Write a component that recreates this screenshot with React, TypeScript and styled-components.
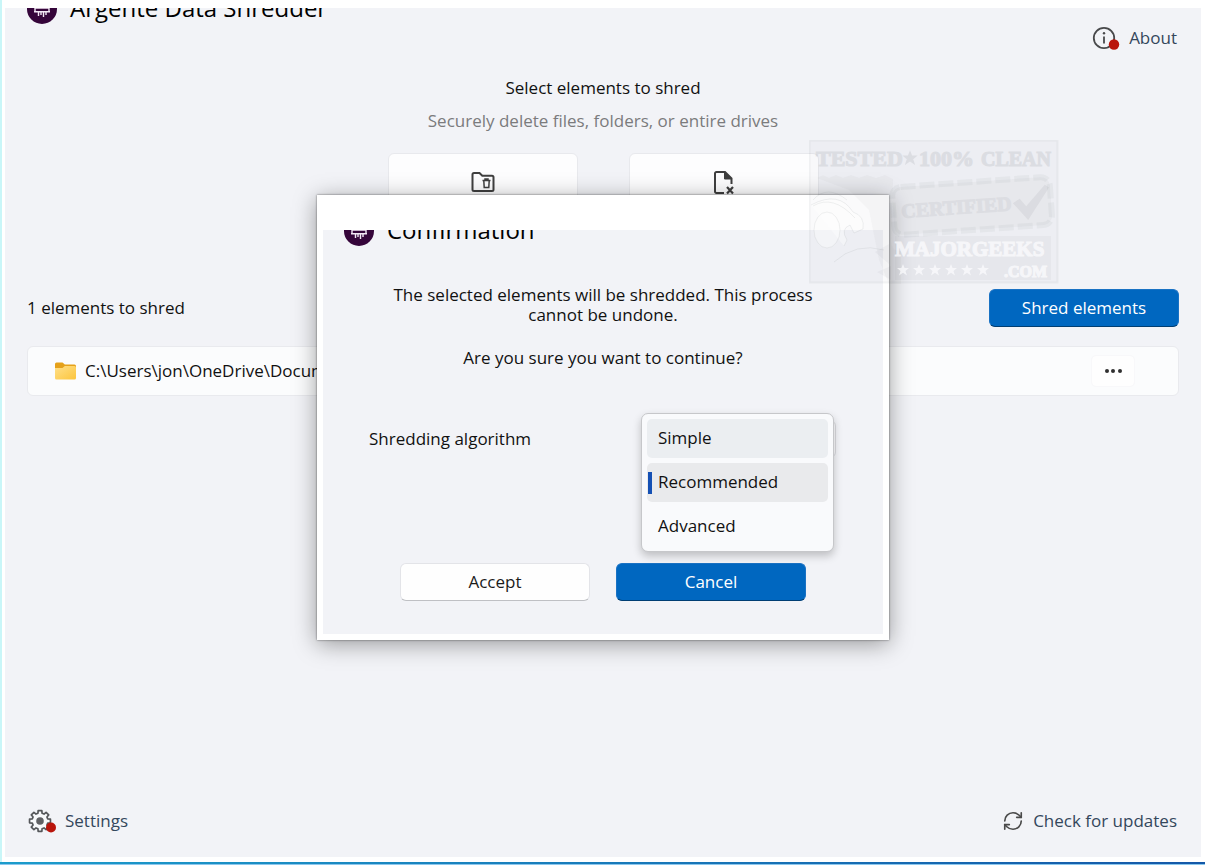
import React from "react";
import styled, { createGlobalStyle, css } from "styled-components";
import { RefreshCw } from "lucide-react";

const GlobalStyle = createGlobalStyle`
  *, *::before, *::after { box-sizing: border-box; }
  body { margin: 0; background: #ffffff; }
  body, button, select {
    font-family: "Open Sans", "Noto Sans", sans-serif;
    font-size: 17px;
    line-height: 24px;
    color: #111111;
  }
  h1, h2, p, ul { margin: 0; padding: 0; font-weight: 400; }
`;

const Window = styled.div`
  position: relative;
  display: flex;
  flex-direction: column;
  min-height: 100vh;
  padding: 8px 4px 5px 3px;
  background: #ffffff;
  border-left: 2px solid #c9f6f8;
`;

const Content = styled.main`
  flex: 1;
  display: flex;
  flex-direction: column;
  padding: 0 22px 22px;
  background: #f2f3f7;
`;

const WindowEdge = styled.div`
  height: 3px;
  margin: 5px -4px -5px -5px;
  flex-shrink: 0;
  background: linear-gradient(90deg, #1c9ccb, #1458a8);
  border-bottom: 1px solid #8cc8ee;
`;

const TitleBar = styled.header`
  display: flex;
  align-items: flex-end;
  gap: 13px;
  height: 16px;
  overflow: hidden;
  flex-shrink: 0;
`;

const Title = styled.h1`
  font-size: 24px;
  line-height: 32px;
  color: #000000;
  white-space: nowrap;
`;

const Toolbar = styled.div`
  display: flex;
  justify-content: flex-end;
`;

const Footer = styled.footer`
  display: flex;
  justify-content: space-between;
  margin-top: auto;
`;

const LinkButton = styled.button`
  display: flex;
  align-items: center;
  gap: 9px;
  height: 28px;
  padding: 0 2px 0 0;
  border: 0;
  background: transparent;
  color: #34475c;
  svg { flex-shrink: 0; color: #4a4a4a; }
`;

const Intro = styled.section`
  display: flex;
  flex-direction: column;
  align-items: center;
  margin-top: 24px;
`;

const Heading = styled.h2`
  font-size: 17px;
  line-height: 24px;
`;

const Hint = styled.p`
  margin-top: 9px;
  color: #7b7b7d;
`;

const Sources = styled.div`
  display: flex;
  gap: 51px;
  margin-top: 20px;
`;

const SourceCard = styled.button`
  display: flex;
  justify-content: center;
  align-items: flex-start;
  width: 190px;
  height: 84px;
  padding: 17px 0 0;
  background: #fdfdfe;
  border: 1px solid #e8e9ed;
  border-radius: 6px;
`;

const ListHeader = styled.div`
  display: flex;
  align-items: center;
  justify-content: space-between;
  margin-top: 52px;
`;

const ActionButton = styled.button<{ $primary?: boolean }>`
  width: 190px;
  height: 38px;
  padding: 0 0 1px;
  border-radius: 6px;
  ${(p) =>
    p.$primary
      ? css`
          background: #0067c0;
          color: #ffffff;
          border: 1px solid #1a72c4;
          border-bottom-color: #003e73;
        `
      : css`
          background: #fefefe;
          color: #1b1b1b;
          border: 1px solid #e3e4e8;
          border-bottom-color: #bfc0c4;
        `}
`;

const ElementRow = styled.div`
  display: flex;
  align-items: center;
  height: 50px;
  margin-top: 19px;
  padding: 0 43px 0 27px;
  background: #fbfcfd;
  border: 1px solid #e9eaee;
  border-radius: 6px;
`;

const Path = styled.span`
  flex: 1;
  margin-left: 9px;
`;

const MoreButton = styled.button`
  display: flex;
  align-items: center;
  justify-content: center;
  width: 44px;
  height: 32px;
  padding: 0;
  border: 1px solid #f8f8fa;
  border-radius: 5px;
  background: #fefefe;
`;

const Overlay = styled.div`
  position: absolute;
  inset: 0;
  display: flex;
  justify-content: center;
  align-items: flex-start;
  padding: 195px 1px 0 0;
`;

const Dialog = styled.section`
  width: 572px;
  padding: 35px 6px 6px;
  background: #ffffff;
  box-shadow: 0 0 2px rgba(0, 0, 0, 0.55), 0 4px 22px rgba(0, 0, 0, 0.38);
`;

const DialogBody = styled.div`
  display: flex;
  flex-direction: column;
  padding: 0 21px 33px;
  background: #f2f3f7;
`;

const Message = styled.div`
  display: flex;
  flex-direction: column;
  gap: 23px;
  align-self: center;
  width: 440px;
  margin-top: 39px;
  text-align: center;
  line-height: 20px;
`;

const Field = styled.div`
  display: flex;
  align-items: center;
  justify-content: space-between;
  margin-top: 52px;
  padding: 0 26px 0 25px;
`;

const Picker = styled.div`
  position: relative;
`;

const Select = styled.select`
  display: block;
  width: 192px;
  height: 38px;
  padding: 0 12px;
  background: #fbfbfd;
  border: 1px solid #d9dade;
  border-radius: 6px;
`;

const Menu = styled.ul`
  position: absolute;
  top: -7px;
  left: -3px;
  width: 193px;
  display: flex;
  flex-direction: column;
  gap: 5px;
  padding: 5px;
  list-style: none;
  background: #f9fafc;
  border: 1px solid #c6c7ca;
  border-radius: 7px;
  box-shadow: 0 4px 9px rgba(0, 0, 0, 0.22);
`;

const Option = styled.li<{ $state?: "hover" | "selected" }>`
  display: flex;
  align-items: center;
  height: 39px;
  padding: 0 0 1px ${(p) => (p.$state === "selected" ? 1 : 11)}px;
  border-radius: 5px;
  background: ${(p) =>
    p.$state === "hover" ? "#ebeef1" : p.$state === "selected" ? "#e9eaec" : "transparent"};
`;

const SelectedBar = styled.span`
  width: 4px;
  height: 22px;
  margin: 1px 6px 0 0;
  background: #1450b4;
`;

const DialogActions = styled.div`
  display: flex;
  justify-content: center;
  gap: 26px;
  margin-top: 105px;
`;

const Watermark = styled.svg`
  position: absolute;
  top: 140px;
  left: calc(50% + 205px);
  pointer-events: none;
`;

function Logo() {
  return (
    <svg width="30" height="30" viewBox="0 0 30 30" aria-hidden="true">
      <circle cx="15" cy="15" r="15" fill="#35053a" />
      <g fill="none" stroke="#f3e8f5" strokeWidth="1.4">
        <path d="M10 14V7h10v7M8 17v-3h14v3M7 17.7h16" />
        <path d="M11.5 18v4M14 18v3M16.5 18v5M19 18v3" />
      </g>
    </svg>
  );
}

function InfoIcon() {
  return (
    <svg width="28" height="26" viewBox="0 0 28 26" aria-hidden="true">
      <circle cx="12" cy="13" r="10.2" fill="none" stroke="#48494b" strokeWidth="1.8" />
      <path d="M12 11.5v7" stroke="#48494b" strokeWidth="1.8" />
      <circle cx="12" cy="8.3" r="1.2" fill="#48494b" />
      <circle cx="22" cy="19.5" r="5.2" fill="#b9150c" />
    </svg>
  );
}

const gearPath = Array.from({ length: 8 }, (_, i) => {
  const point = (deg: number, r: number) => {
    const a = ((i * 45 + deg - 90) * Math.PI) / 180;
    return `${(13 + r * Math.cos(a)).toFixed(2)} ${(13 + r * Math.sin(a)).toFixed(2)}`;
  };
  return `${i ? "L" : "M"}${point(-15, 8)}L${point(-10, 10.6)}L${point(10, 10.6)}L${point(15, 8)}`;
}).join("") + "Z";

function GearIcon() {
  return (
    <svg width="29" height="26" viewBox="0 0 29 26" aria-hidden="true">
      <path d={gearPath} fill="#f8f9fb" stroke="#55575a" strokeWidth="1.7" strokeLinejoin="round" />
      <circle cx="13" cy="13" r="3.8" fill="#606164" />
      <circle cx="24" cy="19.5" r="5" fill="#b9150c" />
    </svg>
  );
}

function FolderTrashIcon() {
  return (
    <svg width="24" height="22" viewBox="0 0 24 22" fill="none" stroke="#3f3f3f" aria-hidden="true">
      <path d="M3 2h5.5l2.8 2.8H21a1.5 1.5 0 0 1 1.5 1.5v12.2A1.5 1.5 0 0 1 21 20H3a1.5 1.5 0 0 1-1.5-1.5v-15A1.5 1.5 0 0 1 3 2z" strokeWidth="2" />
      <path d="M11.5 9.5h8M14 9.3V8h3v1.3M12.8 9.8l.4 6.7h4.6l.4-6.7" strokeWidth="1.5" />
    </svg>
  );
}

function FileRemoveIcon() {
  return (
    <svg width="22" height="24" viewBox="0 0 22 24" fill="none" stroke="#3f3f3f" aria-hidden="true">
      <path d="M11 22H3.4A1.4 1.4 0 0 1 2 20.6V2.4A1.4 1.4 0 0 1 3.4 1H12l6.5 6.5V13" strokeWidth="2" />
      <path d="M11.5 1.5V8H18z" fill="#3f3f3f" />
      <path d="M14 16l6 6.5M20 16l-6 6.5" strokeWidth="2.2" />
    </svg>
  );
}

function FolderIcon() {
  return (
    <svg width="21" height="18" viewBox="0 0 21 18" aria-hidden="true">
      <defs>
        <linearGradient id="folderFront" x1="0" y1="0" x2="1" y2="1">
          <stop offset="0" stopColor="#ffe08a" />
          <stop offset="1" stopColor="#fcc53c" />
        </linearGradient>
      </defs>
      <path d="M0 2a1.5 1.5 0 0 1 1.5-1.5h6L9.8 2.5h9.7A1.5 1.5 0 0 1 21 4v9H0z" fill="#e5a11a" />
      <path d="M0 6h7.5l2.3-2h9.7A1.5 1.5 0 0 1 21 5.5v10.5a1.5 1.5 0 0 1-1.5 1.5h-18A1.5 1.5 0 0 1 0 16z" fill="url(#folderFront)" />
    </svg>
  );
}

function MoreIcon() {
  return (
    <svg width="20" height="6" viewBox="0 0 20 6" fill="#303030" aria-hidden="true">
      <circle cx="4" cy="3" r="2" />
      <circle cx="10" cy="3" r="2" />
      <circle cx="17" cy="3" r="2" />
    </svg>
  );
}

const star = "M0-6L1.6-2 6-2 2.5 1 4 5.5 0 2.8-4 5.5-2.5 1-6-2-1.6-2Z";

function CertifiedStamp() {
  return (
    <Watermark width="250" height="144" viewBox="0 0 250 144" fontFamily="Liberation Serif, serif" fontWeight="700" role="img" aria-label="Tested 100% clean, certified by MajorGeeks.com">
      <rect x="0.5" y="0.5" width="248" height="142" fill="#8a8c94" fillOpacity="0.04" stroke="#777a80" strokeOpacity="0.07" strokeWidth="2" />
      <path d="M8 38l6-3 6 3 7-3 7 3 8-3 8 3 8-3 9 3 9-3 8 4-2 62q0 10 10 10v33H80L70 120 60 70 40 50z" fill="#85878d" fillOpacity="0.05" />
      <g fill="#777a82" stroke="#777a82" strokeWidth="1.2" opacity="0.14">
        <text x="7" y="26" fontSize="22">TESTED</text>
        <path d={star} transform="translate(101 18)" />
        <text x="110" y="26" fontSize="22">100%</text>
        <text x="172" y="26" fontSize="20">CLEAN</text>
      </g>
      <g transform="rotate(-4 163 65)">
        <rect x="84" y="42" width="158" height="48" rx="9" fill="#80838b" fillOpacity="0.06" />
        <rect x="84" y="42" width="158" height="48" rx="9" fill="none" stroke="#777a82" strokeOpacity="0.07" strokeWidth="6" strokeDasharray="15 4" />
        <text x="92" y="73" fontSize="20" fill="#777a82" stroke="#777a82" strokeWidth="1.2" opacity="0.09">CERTIFIED</text>
        <path d="M204 66l7-4 6 8 20-20 4 3-23 31z" fill="#777a82" fillOpacity="0.1" />
      </g>
      <g stroke="#6f7279" strokeOpacity="0.1" fill="#ffffff" fillOpacity="0.35">
        <path d="M2 65Q30 50 44 72q12 4 10 17l-9 4-4-8q-10 4-3 15l-3 6" />
        <ellipse cx="18" cy="90" rx="13" ry="18" />
        <path d="M25 122q22-20 50-12" fill="none" />
        <path d="M4 60q14-16 34 0M4 66q20-12 42 12" fill="none" />
      </g>
      <path d="M66 112l14-8v20zM68 132l14-6v14zM86 96h156v44H86z" fill="#777a82" fillOpacity="0.06" />
      <g fill="#fdfdff" stroke="#fdfdff" strokeWidth="1.2" opacity="0.7">
        <text x="86" y="116" fontSize="21">MAJORGEEKS</text>
        <text x="195" y="137" fontSize="16">.COM</text>
        {[94, 110, 126, 142, 158, 174].map((x) => (
          <path key={x} d={star} strokeWidth="0" transform={`translate(${x} 130)`} />
        ))}
      </g>
    </Watermark>
  );
}

export default function App() {
  return (
    <>
      <GlobalStyle />
      <Window>
        <Content>
          <TitleBar>
            <Logo />
            <Title>Argente Data Shredder</Title>
          </TitleBar>
          <Toolbar>
            <LinkButton type="button">
              <InfoIcon />
              About
            </LinkButton>
          </Toolbar>
          <Intro>
            <Heading>Select elements to shred</Heading>
            <Hint>Securely delete files, folders, or entire drives</Hint>
            <Sources>
              <SourceCard type="button" aria-label="Add folder">
                <FolderTrashIcon />
              </SourceCard>
              <SourceCard type="button" aria-label="Add file">
                <FileRemoveIcon />
              </SourceCard>
            </Sources>
          </Intro>
          <ListHeader>
            <span>1 elements to shred</span>
            <ActionButton type="button" $primary>
              Shred elements
            </ActionButton>
          </ListHeader>
          <ElementRow>
            <FolderIcon />
            <Path>C:\Users\jon\OneDrive\Docum</Path>
            <MoreButton type="button" aria-label="More options">
              <MoreIcon />
            </MoreButton>
          </ElementRow>
          <Footer>
            <LinkButton type="button">
              <GearIcon />
              Settings
            </LinkButton>
            <LinkButton type="button">
              <RefreshCw size={22} strokeWidth={1.8} />
              Check for updates
            </LinkButton>
          </Footer>
        </Content>
        <WindowEdge />
        <Overlay>
          <Dialog role="dialog" aria-labelledby="dialog-title">
            <DialogBody>
              <TitleBar>
                <Logo />
                <Title as="h2" id="dialog-title">
                  Confirmation
                </Title>
              </TitleBar>
              <Message>
                <p>The selected elements will be shredded. This process cannot be undone.</p>
                <p>Are you sure you want to continue?</p>
              </Message>
              <Field>
                <label htmlFor="algorithm">Shredding algorithm</label>
                <Picker>
                  <Select id="algorithm" defaultValue="Recommended">
                    <option>Simple</option>
                    <option>Recommended</option>
                    <option>Advanced</option>
                  </Select>
                  <Menu role="listbox" aria-label="Shredding algorithm">
                    <Option role="option" aria-selected={false} $state="hover">
                      Simple
                    </Option>
                    <Option role="option" aria-selected $state="selected">
                      <SelectedBar />
                      Recommended
                    </Option>
                    <Option role="option" aria-selected={false}>
                      Advanced
                    </Option>
                  </Menu>
                </Picker>
              </Field>
              <DialogActions>
                <ActionButton type="button">Accept</ActionButton>
                <ActionButton type="button" $primary>
                  Cancel
                </ActionButton>
              </DialogActions>
            </DialogBody>
          </Dialog>
        </Overlay>
        <CertifiedStamp />
      </Window>
    </>
  );
}
